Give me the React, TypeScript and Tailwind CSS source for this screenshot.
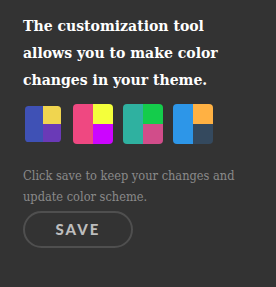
import React from "react";

const swatches = [
  { l: "bg-[#3f51b5]", tr: "bg-[#f0d54f]", br: "bg-[#6a3ab7]", wrap: "scale-90" },
  { l: "bg-[#ef4881]", tr: "bg-[#f4ff3b]", br: "bg-[#cc05ff]", wrap: "" },
  { l: "bg-[#2fb1a0]", tr: "bg-[#14cc4b]", br: "bg-[#d14d8a]", wrap: "" },
  { l: "bg-[#2d96e8]", tr: "bg-[#ffb143]", br: "bg-[#34495e]", wrap: "" },
];

export default function App() {
  return (
    <div className="w-[276px] h-[287px] bg-[#333333] pl-[23px] pr-[10px] pt-[12px] font-['DejaVu_Serif',serif]">
      <p className="w-[215px] text-[15.6px] leading-[27px] font-bold text-white font-stretch-condensed">
        The customization tool allows you to make color changes in your theme.
      </p>
      <div className="flex gap-[10px] mt-[11px]">
        {swatches.map((s, i) => (
          <div key={i} className={`w-[40px] h-[40px] rounded-[4px] overflow-hidden flex ${s.wrap}`}>
            <div className={`w-1/2 h-full ${s.l}`} />
            <div className="w-1/2 h-full flex flex-col">
              <div className={`h-1/2 ${s.tr}`} />
              <div className={`h-1/2 ${s.br}`} />
            </div>
          </div>
        ))}
      </div>
      <p className="mt-[21px] text-[12.7px] leading-[21px] text-[#8a8a8a] font-stretch-condensed">
        Click save to keep your changes and update color scheme.
      </p>
      <button className="mt-[4px] w-[110px] h-[37px] rounded-full border-2 border-[#4f4f4f] text-[#bdbdbd] text-[15px] font-black tracking-[2px] flex items-center justify-center font-['Lato','DejaVu_Sans',sans-serif]">
        SAVE
      </button>
    </div>
  );
}
